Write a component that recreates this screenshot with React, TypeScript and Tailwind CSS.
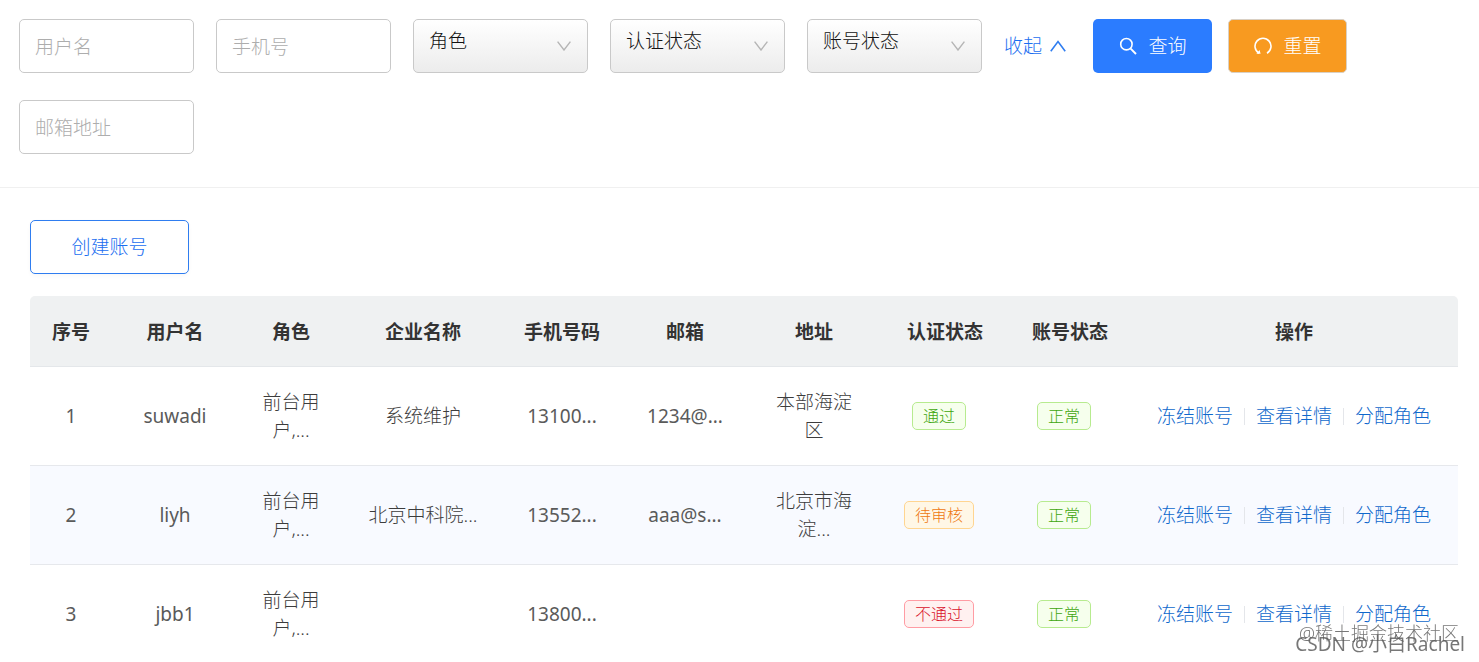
import React from "react";

const fieldBox = "h-[54px] w-[175px] rounded-[5px] border border-[#c9c9c9] px-[15px]";

function TextField({ label }: { label: string }) {
  return (
    <input
      type="text"
      aria-label={label}
      placeholder={label}
      className={`${fieldBox} bg-white pt-[2px] text-[#555] outline-none placeholder:text-[#adadad] focus:border-[#2b7cff]`}
    />
  );
}

function SelectField({ label, options }: { label: string; options: string[] }) {
  return (
    <div className="relative">
      <select
        aria-label={label}
        defaultValue=""
        className={`${fieldBox} block appearance-none bg-linear-to-b from-white to-[#ececec] pb-[10px] text-[#111] outline-none`}
      >
        <option value="">{label}</option>
        {options.map((o) => (
          <option key={o}>{o}</option>
        ))}
      </select>
      <svg
        viewBox="0 0 14 10"
        className="pointer-events-none absolute top-[22px] right-[17px] h-[10px] w-[14px]"
        fill="none"
        stroke="#b5b5b5"
        strokeWidth="1.4"
        aria-hidden="true"
      >
        <path d="M0.6 0.6 L7 9 L13.4 0.6" />
      </svg>
    </div>
  );
}

const tones = {
  green: "border-[#b7eb8f] bg-[#f6ffed] text-[#3ea60c]",
  orange: "border-[#ffd591] bg-[#fff7e6] text-[#ee7711]",
  red: "border-[#ff9ca4] bg-[#fff1f0] text-[#d9112b]",
};

function Tag({ tone, children }: { tone: keyof typeof tones; children: React.ReactNode }) {
  return (
    <div className="flex justify-center pr-3">
      <span className={`rounded-[5px] border px-[10px] text-[16px] leading-[26px] ${tones[tone]}`}>{children}</span>
    </div>
  );
}

const columns = [
  { title: "序号", width: "w-[82px]" },
  { title: "用户名", width: "w-[126px]" },
  { title: "角色", width: "w-[106px]" },
  { title: "企业名称", width: "w-[158px]" },
  { title: "手机号码", width: "w-[120px]" },
  { title: "邮箱", width: "w-[126px]" },
  { title: "地址", width: "w-[132px]" },
  { title: "认证状态", width: "w-[130px]" },
  { title: "账号状态", width: "w-[120px]" },
  { title: "操作", width: "w-[328px]" },
];

type Row = {
  user: string;
  role: string;
  company: string;
  phone: string;
  email: string;
  address: string;
  auth: string;
  tone: keyof typeof tones;
};

const rows: Row[] = [
  { user: "suwadi", role: "前台用户,...", company: "系统维护", phone: "13100...", email: "1234@...", address: "本部海淀区", auth: "通过", tone: "green" },
  { user: "liyh", role: "前台用户,...", company: "北京中科院...", phone: "13552...", email: "aaa@s...", address: "北京市海淀...", auth: "待审核", tone: "orange" },
  { user: "jbb1", role: "前台用户,...", company: "", phone: "13800...", email: "", address: "", auth: "不通过", tone: "red" },
];

const actions = ["冻结账号", "查看详情", "分配角色"];
const latinCell = "font-normal text-[#5a5a5a]";

export default function App() {
  return (
    <main className="h-screen overflow-x-hidden overflow-y-auto bg-white font-['Noto_Sans','Noto_Sans_CJK_SC',sans-serif] text-[19px] leading-7 font-light text-[#3c3c3c] [scrollbar-width:none]">
      <form className="flex flex-wrap items-center gap-x-[22px] gap-y-[27px] border-b border-[#f0f0f0] px-[19px] pt-[19px] pb-[33px]">
        <TextField label="用户名" />
        <TextField label="手机号" />
        <SelectField label="角色" options={["前台用户", "管理员"]} />
        <SelectField label="认证状态" options={["通过", "待审核", "不通过"]} />
        <SelectField label="账号状态" options={["正常", "冻结"]} />
        <div className="flex items-center">
          <button type="button" className="flex items-center gap-2 text-[#1a6ef0]">
            收起
            <svg viewBox="0 0 16 12" className="h-3 w-4" fill="none" stroke="#2f7df0" strokeWidth="1.6" aria-hidden="true">
              <path d="M0.8 11.2 L8 1.6 L15.2 11.2" />
            </svg>
          </button>
          <button type="submit" className="ml-[27px] flex h-[54px] w-[119px] items-center justify-center gap-3 rounded-[5px] bg-[#2b7cff] text-white">
            <svg viewBox="0 0 18 18" className="size-[18px]" fill="none" stroke="currentColor" strokeWidth="1.6" aria-hidden="true">
              <circle cx="7.4" cy="7.2" r="5.7" />
              <path d="M11.4 11.3 L17 17" strokeWidth="1.9" />
            </svg>
            查询
          </button>
          <button type="reset" className="ml-4 flex h-[54px] w-[119px] items-center justify-center gap-3 rounded-[5px] border border-[#d9d0c4] bg-[#f89a20] text-white">
            <svg viewBox="0 0 18 18" className="size-[18px]" fill="none" stroke="currentColor" strokeWidth="1.6" aria-hidden="true">
              <path d="M5 16.2 A8 8 0 1 1 13 16.2" />
              <path d="M2.4 16.8 H6.6 L5.6 13 Z" fill="currentColor" stroke="none" />
            </svg>
            重置
          </button>
        </div>
        <TextField label="邮箱地址" />
      </form>

      <section className="pt-8 pr-[21px] pl-[30px]">
        <button type="button" className="mb-[22px] block h-[54px] w-[159px] rounded-[5px] border border-[#2f7df0] bg-white text-[#1a6ef0] shadow-[0_2px_4px_rgba(0,0,0,0.03)]">
          创建账号
        </button>
        <table className="w-full table-fixed border-separate border-spacing-0 text-center">
          <colgroup>
            {columns.map((c) => (
              <col key={c.title} className={c.width} />
            ))}
          </colgroup>
          <thead>
            <tr>
              {columns.map((c) => (
                <th key={c.title} scope="col" className="border-b border-[#e4e7ea] bg-[#eff1f2] pt-[22px] pb-5 font-bold text-[#333] first:rounded-tl-[5px] last:rounded-tr-[5px]">
                  {c.title}
                </th>
              ))}
            </tr>
          </thead>
          <tbody className="[&_td]:border-b [&_td]:border-[#e6e8ec] [&_td]:px-[20px] [&_td]:py-[21px]">
            {rows.map((r, i) => (
              <tr key={r.user} className="even:bg-[#f8faff]">
                <td className={latinCell}>{i + 1}</td>
                <td className={latinCell}>{r.user}</td>
                <td>{r.role}</td>
                <td>{r.company}</td>
                <td className={latinCell}>{r.phone}</td>
                <td className={latinCell}>{r.email}</td>
                <td>{r.address}</td>
                <td>
                  <Tag tone={r.tone}>{r.auth}</Tag>
                </td>
                <td>
                  <Tag tone="green">正常</Tag>
                </td>
                <td>
                  <div className="flex items-center justify-center">
                    {actions.map((a, k) => (
                      <React.Fragment key={a}>
                        {k > 0 && <span className="mx-[11px] h-[17px] w-px bg-[#e4e6ea]" />}
                        <a href="#" className="whitespace-nowrap text-[#0f68cc]">
                          {a}
                        </a>
                      </React.Fragment>
                    ))}
                  </div>
                </td>
              </tr>
            ))}
          </tbody>
        </table>
      </section>

      <div className="pointer-events-none fixed right-[14px] bottom-1 flex flex-col items-end text-[#555]/80">
        <span className="-mb-[9px] mr-[6px] text-[18px] leading-[11px]">@稀土掘金技术社区</span>
        <span className="text-[19px] leading-7 font-normal">CSDN @小白Rachel</span>
      </div>
    </main>
  );
}
